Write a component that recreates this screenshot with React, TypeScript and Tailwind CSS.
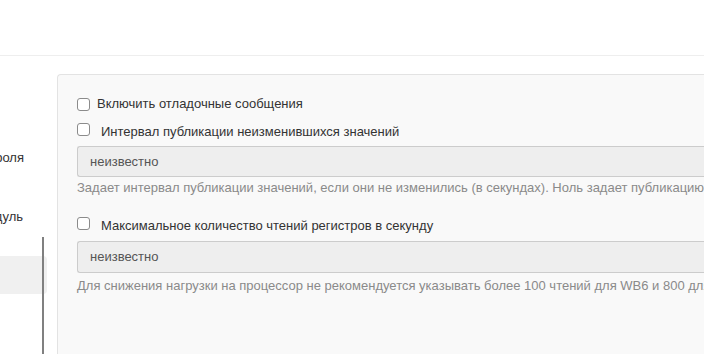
import React from 'react';

const Checkbox = () => (
    <span className="inline-block w-[13px] h-[13px] shrink-0 rounded-[3px] border border-[#8b8b8b] bg-white" />
);

export default function App() {
    return (
        <div
            className="w-[704px] h-[354px] overflow-hidden bg-white text-[13px] text-[#333]"
            style={{ fontFamily: '"Liberation Sans", Arial, sans-serif' }}
        >
            {/* header */}
            <div className="h-[56px] border-b border-[#eeeeee]" />

            <div className="flex h-[298px]">
                {/* sidebar, scrolled off to the left */}
                <div className="relative w-[57px] shrink-0 overflow-hidden">
                    <div className="flex w-[47px] flex-col">
                        <div className="mt-[92px] flex h-[20px] items-center justify-end whitespace-nowrap pr-[23px] text-[#333]">
                            Режим контроля
                        </div>
                        <div className="mt-[39px] flex h-[20px] items-center justify-end whitespace-nowrap pr-[24px] text-[#333]">
                            Модуль
                        </div>
                        <div className="mt-[29px] h-[38px] rounded-r-[4px] bg-[#f0f0f0]" />
                    </div>
                    <div className="absolute left-[42px] top-[181px] bottom-0 w-[2px] bg-[#808080]" />
                </div>

                {/* settings panel */}
                <div className="mt-[18px] flex-1 rounded-tl-[4px] border-l border-t border-[#e3e3e3] bg-[#f9f9f9] pl-[19px]">
                    <div className="mt-[23px] flex items-start gap-[7px]">
                        <Checkbox />
                        <span className="-mt-[2px] leading-[15px] whitespace-nowrap">Включить отладочные сообщения</span>
                    </div>

                    <div className="mt-[12px] flex items-start gap-[11px]">
                        <Checkbox />
                        <span className="mt-[1px] leading-[15px] whitespace-nowrap">Интервал публикации неизменившихся значений</span>
                    </div>
                    <div className="mt-[7px] flex h-[31px] items-center whitespace-nowrap rounded-l-[3px] border border-r-0 border-[#cccccc] bg-[#eeeeee] pl-[12px] text-[#555]">
                        неизвестно
                    </div>
                    <div className="mt-[2px] whitespace-nowrap leading-[18px] text-[#8a8a8a]">
                        Задает интервал публикации значений, если они не изменились (в секундах). Ноль задает публикацию при каждом опросе
                    </div>

                    <div className="mt-[20px] flex items-start gap-[11px]">
                        <Checkbox />
                        <span className="mt-[1px] leading-[15px] whitespace-nowrap">Максимальное количество чтений регистров в секунду</span>
                    </div>
                    <div className="mt-[8px] flex h-[32px] items-center whitespace-nowrap rounded-l-[3px] border border-r-0 border-[#cccccc] bg-[#eeeeee] pl-[12px] text-[#555]">
                        неизвестно
                    </div>
                    <div className="mt-[4px] whitespace-nowrap leading-[18px] text-[#8a8a8a]">
                        Для снижения нагрузки на процессор не рекомендуется указывать более 100 чтений для WB6 и 800 для WB7
                    </div>
                </div>
            </div>
        </div>
    );
}
